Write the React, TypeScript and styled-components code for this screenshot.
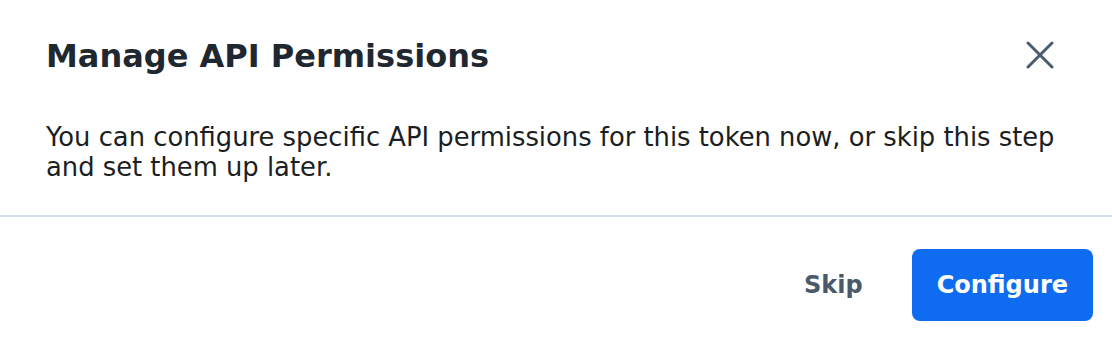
import React from "react";
import styled, { createGlobalStyle } from "styled-components";

const Global = createGlobalStyle`
  html, body { margin: 0; padding: 0; background: #ffffff; }
  body { font-family: "DejaVu Sans", sans-serif; -webkit-font-smoothing: antialiased; }
`;

const Dialog = styled.div`
  width: 1112px;
  height: 348px;
  background: #ffffff;
  display: flex;
  flex-direction: column;
`;

const Header = styled.div`
  display: flex;
  align-items: flex-start;
  justify-content: space-between;
  padding: 36px 46px 0 46px;
`;

const Title = styled.h2`
  margin: 0;
  font-family: "DejaVu Sans", sans-serif;
  font-weight: 700;
  font-size: 32px;
  line-height: 40px;
  color: #1f2730;
`;

const CloseButton = styled.button`
  border: 0;
  background: transparent;
  padding: 0;
  margin: 1px 8px 0 0;
  width: 36px;
  height: 36px;
  display: flex;
  align-items: center;
  justify-content: center;
  cursor: pointer;
`;

const Body = styled.p`
  margin: 0;
  padding: 46px 36px 33px 46px;
  font-family: "DejaVu Sans", sans-serif;
  font-size: 25.8px;
  line-height: 30px;
  color: #1b1e22;
`;

const Divider = styled.hr`
  margin: 0;
  border: 0;
  height: 2px;
  background: #d8e2ec;
`;

const Footer = styled.div`
  display: flex;
  justify-content: flex-end;
  align-items: center;
  gap: 25px;
  padding: 32px 19px 0 0;
`;

const Button = styled.button<{ $primary?: boolean }>`
  border: 0;
  border-radius: 8px;
  height: 72px;
  padding: 0 ${(p) => (p.$primary ? "25px" : "24px")};
  font-family: "DejaVu Sans", sans-serif;
  font-weight: 700;
  font-size: 24px;
  cursor: pointer;
  background: ${(p) => (p.$primary ? "#0f6cf0" : "transparent")};
  color: ${(p) => (p.$primary ? "#ffffff" : "#4b5a6b")};
`;

export default function App() {
  return (
    <>
      <Global />
      <Dialog>
        <Header>
          <Title>Manage API Permissions</Title>
          <CloseButton aria-label="Close">
            <svg width="28" height="28" viewBox="0 0 28 28" fill="none">
              <path d="M2 2L26 26M26 2L2 26" stroke="#4b5a6d" strokeWidth="3" strokeLinecap="round" />
            </svg>
          </CloseButton>
        </Header>
        <Body>
          You can configure specific API permissions for this token now, or skip this step and set them up later.
        </Body>
        <Divider />
        <Footer>
          <Button>Skip</Button>
          <Button $primary>Configure</Button>
        </Footer>
      </Dialog>
    </>
  );
}
